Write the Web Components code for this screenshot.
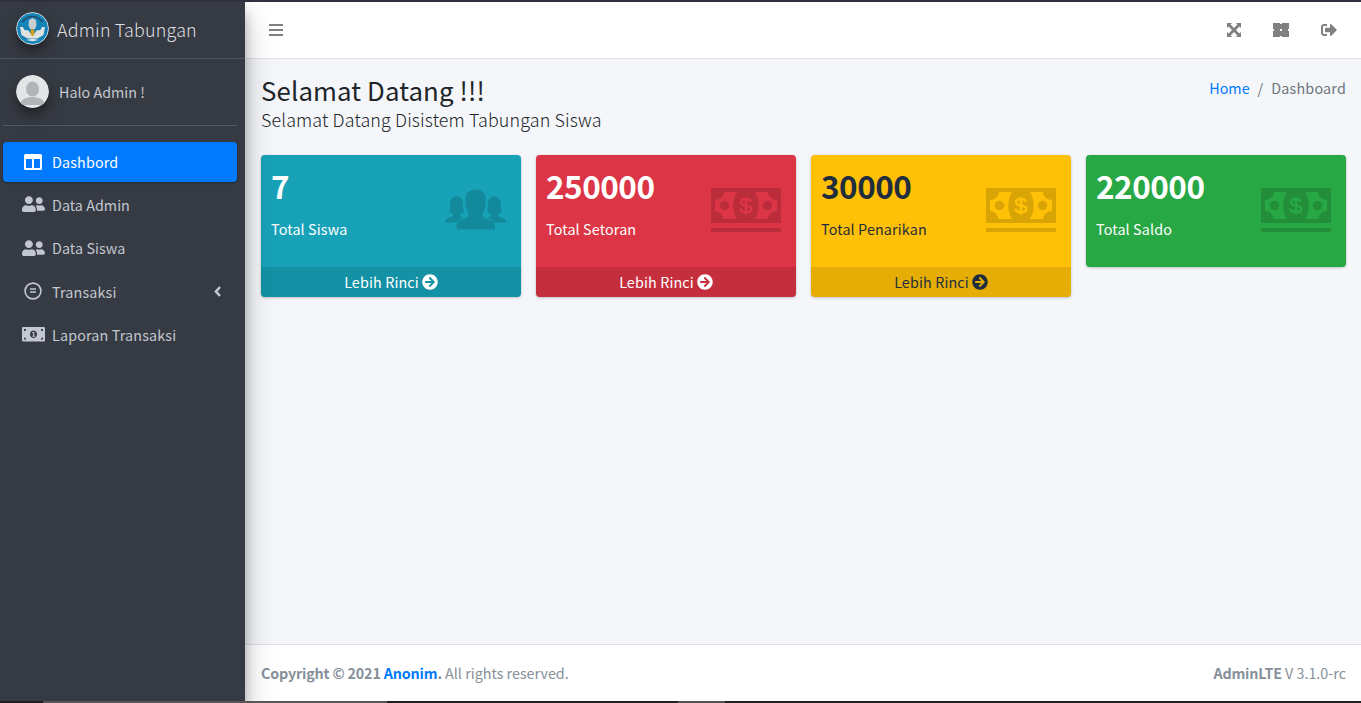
<!DOCTYPE html>
<html lang="id">
<head>
<meta charset="utf-8">
<title>Admin Tabungan</title>
<style>
html,body{margin:0;height:100%;overflow:hidden}
body{font-family:"Source Sans Pro","Noto Sans CJK SC","Noto Sans",sans-serif;font-size:14.33px;line-height:24px;background:#f4f6f9;color:#212529}
</style>
</head>
<body>
<admin-app></admin-app>
<script>
const ICONS = {
  bars:'<svg viewBox="0 0 14 12"><path fill="currentColor" d="M0 0h14v2H0zM0 5h14v2H0zM0 10h14v2H0z"/></svg>',
  expand:'<svg viewBox="0 0 14 14"><path fill="currentColor" d="M0 0h5L3.6 1.6 7 5l3.4-3.4L9 0h5v5l-1.6-1.4L9 7l3.4 3.4L14 9v5H9l1.4-1.6L7 9l-3.4 3.4L5 14H0V9l1.6 1.4L5 7 1.6 3.6 0 5z"/></svg>',
  large:'<svg viewBox="0 0 16 14"><path fill="currentColor" d="M0 0h7v1h2V0h7v6h-1v2h1v6H9v-1H7v1H0V8h1V6H0z"/><path fill="#fff" d="M7 6h2v2H7z"/></svg>',
  out:'<svg viewBox="0 0 512 512"><path fill="currentColor" d="M497 273L329 441c-15 15-41 4.500-41-17v-96H152c-13.300 0-24-10.700-24-24v-96c0-13.300 10.700-24 24-24h136V88c0-21.400 25.900-32 41-17l168 168c9.300 9.400 9.300 24.600 0 34zM192 436v-40c0-6.600-5.400-12-12-12H96c-17.700 0-32-14.300-32-32V160c0-17.700 14.300-32 32-32h84c6.600 0 12-5.400 12-12V76c0-6.600-5.400-12-12-12H96c-53 0-96 43-96 96v192c0 53 43 96 96 96h84c6.600 0 12-5.400 12-12z"/></svg>',
  columns:'<svg viewBox="0 0 18 16"><path fill="currentColor" fill-rule="evenodd" d="M1.500 0h15A1.500 1.500 0 0 1 18 1.500v13a1.500 1.500 0 0 1-1.500 1.500h-15A1.500 1.500 0 0 1 0 14.500v-13A1.500 1.500 0 0 1 1.500 0zM2 5v9h6V5zm8 0v9h6V5z"/></svg>',
  users:'<svg viewBox="0 0 640 512" preserveAspectRatio="none"><path fill="currentColor" d="M192 256c61.900 0 112-50.100 112-112S253.900 32 192 32 80 82.100 80 144s50.100 112 112 112zm76.800 32h-8.300c-20.800 10-43.900 16-68.500 16s-47.600-6-68.500-16h-8.300C51.600 288 0 339.600 0 403.200V432c0 26.500 21.500 48 48 48h288c26.500 0 48-21.500 48-48v-28.800c0-63.600-51.600-115.200-115.200-115.200zM480 256c53 0 96-43 96-96s-43-96-96-96-96 43-96 96 43 96 96 96zm48 32h-3.800c-13.900 4.800-28.600 8-44.200 8s-30.300-3.200-44.200-8H432c-20.400 0-39.200 5.900-55.700 15.400 24.400 26.300 39.700 61.200 39.700 99.800v38.400c0 2.200-.5 4.300-.6 6.400H592c26.500 0 48-21.500 48-48 0-61.900-50.100-112-112-112z"/></svg>',
  equal:'<svg viewBox="0 0 18 18"><circle cx="9" cy="9" r="7.900" fill="none" stroke="currentColor" stroke-width="1.600"/><path fill="currentColor" d="M6 6.300h6v1.500H6zM6 9.300h6v1.500H6z"/></svg>',
  bill:'<svg viewBox="0 0 23 15"><path fill="currentColor" fill-rule="evenodd" d="M1.300 0h20.400A1.300 1.300 0 0 1 23 1.300v12a1.300 1.300 0 0 1-1.300 1.300H1.300A1.300 1.300 0 0 1 0 13.300v-12A1.300 1.300 0 0 1 1.300 0zM2 2v2.200A2.200 2.200 0 0 0 4.200 2zm16.800 0A2.200 2.200 0 0 0 21 4.200V2zM2 10.400v2.200h2.200A2.200 2.200 0 0 0 2 10.400zm19 0a2.200 2.200 0 0 0-2.200 2.200H21zM11.500 3.500C9.600 3.500 8 5.200 8 7.300s1.600 3.800 3.500 3.800S15 9.400 15 7.300s-1.600-3.800-3.500-3.800z"/><path fill="currentColor" d="M10.300 5.200l1-.4h1v3.900h.8v1h-2.800v-1h.9V6.200h-.9z"/></svg>',
  left:'<svg viewBox="0 0 7 11"><path fill="none" stroke="currentColor" stroke-width="2.600" d="M6 1L2 5.500 6 10"/></svg>',
  arrow:'<svg viewBox="0 0 512 512"><path fill="currentColor" d="M256 8c137 0 248 111 248 248S393 504 256 504 8 393 8 256 119 8 256 8zm-28.900 143.600l75.500 72.400H120c-13.300 0-24 10.700-24 24v16c0 13.300 10.700 24 24 24h182.600l-75.500 72.400c-9.700 9.300-9.900 24.800-.4 34.300l11 10.900c9.400 9.400 24.600 9.400 33.900 0L404.300 273c9.400-9.400 9.400-24.600 0-33.900L271.600 106.300c-9.400-9.400-24.600-9.400-33.900 0l-11 10.900c-9.500 9.600-9.300 25.100.4 34.400z"/></svg>',
  crowd:'<svg viewBox="0 0 61 41"><g fill="currentColor"><path d="M12 33.500c2-2.500 8-3.500 10.700-5.500 1-1 .8-3 .3-4.500-1-1-1.500-2.500-1.600-4-1-.5-1.300-3-.6-4-.8-3-.7-5.500-.2-8C21.400 3.300 25.500.5 30.500.5s9.200 2.800 9.900 7c.5 2.500.6 5-.2 8 .7 1 .4 3.500-.6 4-.1 1.500-.6 3-1.600 4-.5 1.500-.7 3.500.3 4.500 2.700 2 8.700 3 10.700 5.500 1 2 1 4.500 1 7H12c0-2.500-1-5 0-7z"/><path d="M0 33.500c.2-2 .8-3.500 2.500-4.200 2-.9 5.500-1.200 5.500-3.300v-1.500c-1.500 0-3-.6-4-1.500C5.500 20 5 17 5.200 13.500 5.500 9.800 8 7.500 11.500 7.500s6.200 2.300 6.500 6c.2 3.500-.2 6.500 1 9.500-1 1-2.500 1.500-4 1.500V26c0 1.500 1.500 2 4 2.500-2 1.200-5.500 1.500-7.500 5z"/><path d="M61 33.500c-.2-2-.8-3.500-2.500-4.200-2-.9-5.500-1.200-5.500-3.300v-1.500c1.500 0 3-.6 4-1.500-1.500-3-1-6-1.200-9.500-.3-3.700-2.800-6-6.300-6s-6.200 2.300-6.500 6c-.2 3.500.2 6.500-1 9.500 1 1 2.500 1.500 4 1.500V26c0 1.500-1.500 2-4 2.500 2 1.200 5.500 1.500 7.500 5z"/></g></svg>',
  cash:'<svg viewBox="0 0 70 44"><path fill="currentColor" fill-rule="evenodd" d="M0 0h70v35H0zM13 4c0 4-4 8-9 8v11c5 0 8 4 8.500 8H26c-5-8-5-19 0-27zM57 4H44c5 8 5 19 0 27h13c.5-4 4-8 9-8V12c-5 0-9-4-9-8z"/><circle cx="13.500" cy="17.500" r="4.700" fill="currentColor"/><circle cx="56.500" cy="17.500" r="4.700" fill="currentColor"/><path fill="currentColor" d="M0 40h70v4H0z"/><path fill="none" stroke="var(--card-bg)" stroke-width="2.500" d="M40 13.700c-.5-2-2.300-2.700-5-2.700-3 0-5 1-5 3.200 0 4.800 10.400 2 10.400 6.800 0 2.200-2.200 3.300-5.400 3.300-3 0-5.400-1.200-5.600-3.600M35 9v17.500"/></svg>'
};

class UiIcon extends HTMLElement {
  connectedCallback() {
    const r = this.attachShadow({mode:'open'});
    r.innerHTML = `<style>:host{display:block;flex:none}svg{display:block;width:100%;height:100%}</style>${ICONS[this.getAttribute('name')]}`;
  }
}
customElements.define('ui-icon', UiIcon);

const define = (name, html) => {
  const t = document.createElement('template');
  t.innerHTML = html;
  customElements.define(name, class extends HTMLElement {
    constructor() {
      super();
      this.attachShadow({mode:'open'}).append(t.content.cloneNode(true));
    }
  });
};

define('nav-item', `<style>
:host{display:flex;align-items:center;height:40px;margin-bottom:3.3px;padding:0 16px 0 19px;border-radius:4px;color:#c2c7d0;box-sizing:border-box;letter-spacing:.15px}
:host([active]){background:#007bff;color:#fff;box-shadow:0 1px 3px rgba(0,0,0,.12),0 1px 2px rgba(0,0,0,.24)}
.i{width:23px;display:flex;justify-content:center;margin-right:7px;margin-top:-2px}
.t{flex:1;white-space:nowrap;margin-top:-.4px}
</style><span class="i"><slot name="icon"></slot></span><span class="t"><slot></slot></span><slot name="end"></slot>`);

define('side-bar', `<style>
:host{display:block;width:245px;background:#363a43;color:#c2c7d0;position:relative;z-index:2;box-shadow:0 14px 28px rgba(0,0,0,.25),0 10px 10px rgba(0,0,0,.22)}
.brand{height:56px;border-bottom:1px solid #4b545c;display:flex;align-items:center;padding-left:16px}
.pic{width:33px;height:33px;border-radius:50%;box-shadow:0 10px 20px rgba(0,0,0,.19),0 6px 6px rgba(0,0,0,.23);flex:none}
.brand .pic{margin-top:-3px}
.brand b{font-weight:300;font-size:17.9px;margin:-2px 0 0 8px;color:#dedfe1;white-space:nowrap;letter-spacing:.2px}
.user{height:66px;border-bottom:1px solid #4f5962;margin:0 8px 16px 3px;display:flex;align-items:center;padding-left:13px;box-sizing:content-box}
.user .pic{margin-top:-1px}
.user span{margin-left:10px}
nav{margin:0 8px 0 3px}
</style>
<div class="brand">
<svg class="pic" viewBox="0 0 33 33"><circle cx="16.500" cy="16.500" r="16" fill="#1683b8" stroke="#d9dcdc" stroke-width="1"/><path d="M6 10Q16.500-1 27 10" fill="none" stroke="#234c66" stroke-width="1.600"/><path d="M13 8l3.500-2L20 8l.5 5-1.500 4h-5l-1.500-4z" fill="#c9ced0"/><path d="M4 15l3 0 1.500 3 4 .5 2 3h4l2-3 4-.5L26 15h3l-1.500 8-6 3.500h-10L5.500 23z" fill="#dfe2e1"/><path d="M14.500 17.500h4l-.4 5-1.600 2-1.600-2z" fill="#d4a21c"/><path d="M10 28l6.500-1.200L23 28l-6.500 1.200z" fill="#e7e9e8"/></svg>
<b>Admin Tabungan</b></div>
<div class="user"><svg class="pic" viewBox="0 0 33 33"><defs><clipPath id="c"><circle cx="16.500" cy="16.500" r="16.500"/></clipPath></defs><g clip-path="url(#c)"><path fill="#e3e5e6" d="M0 0h33v33H0z"/><ellipse cx="16.500" cy="14" rx="6.500" ry="7.500" fill="#afb5b9"/><path fill="#afb5b9" d="M4.500 30c0-6 6-8 12-8s12 2 12 8z"/></g></svg><span>Halo Admin !</span></div>
<nav>
<nav-item active><ui-icon slot="icon" name="columns" style="width:18px;height:16px;margin:1px 2px 0 0"></ui-icon>Dashbord</nav-item>
<nav-item style="letter-spacing:.03px"><ui-icon slot="icon" name="users" style="width:23px;height:18px"></ui-icon>Data Admin</nav-item>
<nav-item style="letter-spacing:.08px"><ui-icon slot="icon" name="users" style="width:23px;height:18px"></ui-icon>Data Siswa</nav-item>
<nav-item><ui-icon slot="icon" name="equal" style="width:18px;height:18px;margin-right:2px"></ui-icon>Transaksi<ui-icon slot="end" name="left" style="width:7px;height:11px;margin-top:-1px"></ui-icon></nav-item>
<nav-item><ui-icon slot="icon" name="bill" style="width:23px;height:15px"></ui-icon>Laporan Transaksi</nav-item>
</nav>`);

define('top-bar', `<style>
:host{display:flex;align-items:center;height:56px;background:#fff;border-bottom:1px solid #dee2e6;padding:0 24px;color:#808080}
.sp{flex:1}
</style>
<ui-icon name="bars" style="width:14px;height:12px"></ui-icon><span class="sp"></span>
<ui-icon name="expand" style="width:14px;height:14px;margin-right:32px"></ui-icon>
<ui-icon name="large" style="width:16px;height:14px;margin-right:32px"></ui-icon>
<ui-icon name="out" style="width:16px;height:16px"></ui-icon>`);

define('page-head', `<style>
:host{display:flex;justify-content:space-between;padding:14px 15px 0 16px;height:82px}
h1{font-weight:400;font-size:25.800px;line-height:34px;margin:0;letter-spacing:.13px}
h5{font-weight:300;font-size:17.900px;line-height:24px;margin:0;letter-spacing:.13px}
.c{display:flex;margin-top:3px;color:#6c757d}
.c a{color:#007bff}.c i{font-style:normal;margin:0 8px}
.c span{letter-spacing:.2px}
</style><div><h1>Selamat Datang !!!</h1><h5>Selamat Datang Disistem Tabungan Siswa</h5></div>
<div class="c"><a>Home</a><i>/</i><span>Dashboard</span></div>`);

define('small-box', `<style>
:host{display:block;border-radius:4px;background:var(--card-bg);color:#fff;box-shadow:0 0 1px rgba(0,0,0,.125),0 1px 3px rgba(0,0,0,.2);overflow:hidden}
.in{height:112px;display:flex;justify-content:space-between;box-sizing:border-box;padding:9px 15px 0 10px}
h3{font-size:31.500px;line-height:42px;font-weight:700;margin:0 0 11px;letter-spacing:-.5px}
p{margin:0;letter-spacing:.13px}
.ic{color:rgba(0,0,0,.15);padding-top:24px}
</style><div class="in"><div><h3><slot name="value"></slot></h3><p><slot></slot></p></div><div class="ic"><slot name="icon"></slot></div></div><slot name="more"></slot>`);

define('more-link', `<style>
:host{display:flex;align-items:center;justify-content:center;height:30px;background:rgba(0,0,0,.1);letter-spacing:.13px}
ui-icon{width:16px;height:16px;margin-left:3px}
</style><slot></slot><ui-icon name="arrow"></ui-icon>`);

define('card-row', `<style>
:host{display:grid;grid-template-columns:repeat(4,260px);gap:15px;padding:0 15px 0 16px;align-items:start}
</style>
<small-box style="--card-bg:#17a2b8"><span slot="value">7</span>Total Siswa<ui-icon slot="icon" name="crowd" style="width:61px;height:41px;margin-top:1px"></ui-icon><more-link slot="more">Lebih Rinci</more-link></small-box>
<small-box style="--card-bg:#dc3545"><span slot="value">250000</span>Total Setoran<ui-icon slot="icon" name="cash" style="width:70px;height:44px"></ui-icon><more-link slot="more">Lebih Rinci</more-link></small-box>
<small-box style="--card-bg:#ffc107;color:#1f2d3d"><span slot="value">30000</span>Total Penarikan<ui-icon slot="icon" name="cash" style="width:70px;height:44px"></ui-icon><more-link slot="more">Lebih Rinci</more-link></small-box>
<small-box style="--card-bg:#28a745"><span slot="value">220000</span>Total Saldo<ui-icon slot="icon" name="cash" style="width:70px;height:44px"></ui-icon></small-box>`);

define('page-footer', `<style>
:host{display:flex;justify-content:space-between;align-items:center;height:56px;margin-top:auto;background:#fff;border-top:1px solid #dee2e6;color:#869099;padding:0 15px 0 16px}
a{color:#007bff}b{font-weight:700;letter-spacing:-.18px}
</style><div><b>Copyright © 2021 <a>Anonim</a>.</b> All rights reserved.</div><div><b>AdminLTE</b> V 3.1.0-rc</div>`);

define('admin-app', `<style>
:host{display:flex;flex-direction:column;height:703px}
.edge{height:2px;background:#30303f;flex:none;position:relative;z-index:3}
.edge.b{background:linear-gradient(90deg,#231f20 43px,#5a5657 43px 387px,#231f20 387px 678px,#555152 678px 725px,#231f20 725px)}
.body{flex:1;display:flex;min-height:0}
main{flex:1;display:flex;flex-direction:column}
</style><div class="edge"></div><div class="body"><side-bar></side-bar><main><top-bar></top-bar><page-head></page-head><card-row></card-row><page-footer></page-footer></main></div><div class="edge b"></div>`);
</script>
</body>
</html>
